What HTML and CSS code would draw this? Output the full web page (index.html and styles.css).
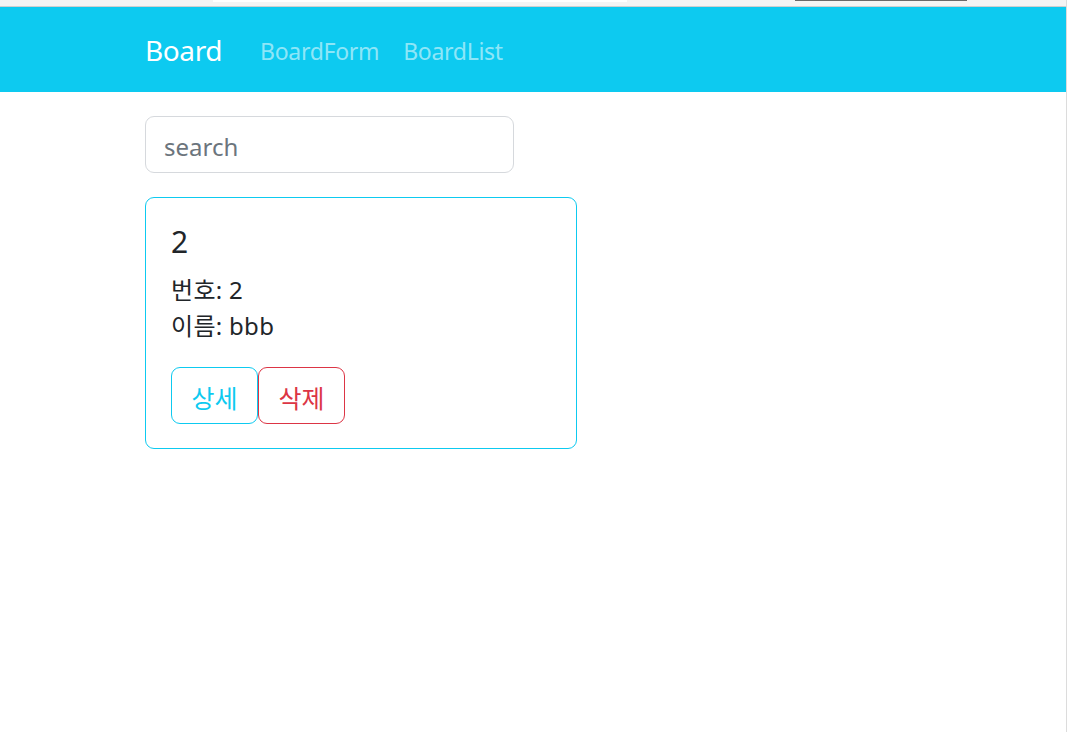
FILE: index.html
```html
<!DOCTYPE html>
<html lang="ko">
<head>
<meta charset="utf-8">
<title>Board</title>
<link rel="stylesheet" href="styles.css">
</head>
<body>
<div class="page">
  <div class="chrome">
    <div class="chrome-field"></div>
    <div class="chrome-bar"></div>
  </div>
  <nav class="navbar">
    <div class="container nav-inner">
      <a class="brand" href="#">Board</a>
      <a class="nav-link" href="#">BoardForm</a>
      <a class="nav-link" href="#">BoardList</a>
    </div>
  </nav>
  <main class="container main">
    <input class="search" type="text" placeholder="search">
    <div class="card">
      <h5 class="card-title">2</h5>
      <p class="line">번호: 2</p>
      <p class="line">이름: bbb</p>
      <div class="actions">
        <button class="btn btn-info">상세</button>
        <button class="btn btn-danger">삭제</button>
      </div>
    </div>
  </main>
</div>
</body>
</html>
```
FILE: styles.css
```css
* { box-sizing: border-box; }
html, body { margin: 0; padding: 0; background: #fff; }
body {
  font-family: "Noto Sans", "Noto Sans CJK KR", sans-serif;
  color: #212529;
  font-size: 24px;
  line-height: 1.5;
}
.page {
  width: 1067px;
  min-height: 732px;
  border-right: 1px solid #dcdcdc;
}
.chrome {
  height: 7px;
  background: #f4f4f4;
  border-bottom: 1px solid #cfcfcf;
  display: flex;
  align-items: flex-start;
}
.chrome-field {
  margin-left: 213px;
  width: 414px;
  height: 2px;
  background: #fff;
}
.chrome-bar {
  margin-left: 168px;
  width: 172px;
  height: 1px;
  background: #6a6a6a;
}
.navbar {
  background: #0dcaf0;
  height: 85px;
  display: flex;
  align-items: center;
}
.container {
  width: 810px;
  margin: 0 auto 0 127px;
  padding: 0 18px;
}
.nav-inner {
  display: flex;
  align-items: center;
  padding-top: 2px;
}
.brand {
  color: #fff;
  text-decoration: none;
  font-size: 28px;
  letter-spacing: -0.4px;
  line-height: 45px;
  padding: 7px 0;
  margin-right: 26px;
}
.nav-link {
  color: rgba(255, 255, 255, 0.55);
  text-decoration: none;
  font-size: 23px;
  letter-spacing: -0.3px;
  line-height: 36px;
  padding: 12px 12px;
}
.main {
  padding-top: 24px;
  display: flex;
  flex-direction: column;
  align-items: flex-start;
}
.search {
  width: 369px;
  height: 57px;
  padding: 11px 18px 7px;
  font: inherit;
  color: #212529;
  border: 1px solid #d6d9dd;
  border-radius: 9px;
  outline: none;
}
.search::placeholder { color: #6c757d; }
.card {
  margin-top: 24px;
  width: 432px;
  border: 1px solid #0dcaf0;
  border-radius: 9px;
  padding: 25px 25px 24px;
}
.card-title {
  margin: 0 0 12px;
  padding-top: 2px;
  font-size: 30px;
  line-height: 34px;
  font-weight: 400;
}
.line {
  margin: 0;
  line-height: 36px;
  padding-top: 1px;
  height: 36px;
  letter-spacing: 0.3px;
}
.actions {
  margin-top: 24px;
  display: flex;
}
.btn {
  font: inherit;
  font-size: 25px;
  line-height: 36px;
  width: 87px;
  padding: 11px 0 7px;
  text-align: center;
  background: #fff;
  border-radius: 9px;
  border: 1px solid;
  height: 57px;
}
.btn-info { color: #0dcaf0; border-color: #0dcaf0; }
.btn-danger { color: #dc3545; border-color: #dc3545; }
```
